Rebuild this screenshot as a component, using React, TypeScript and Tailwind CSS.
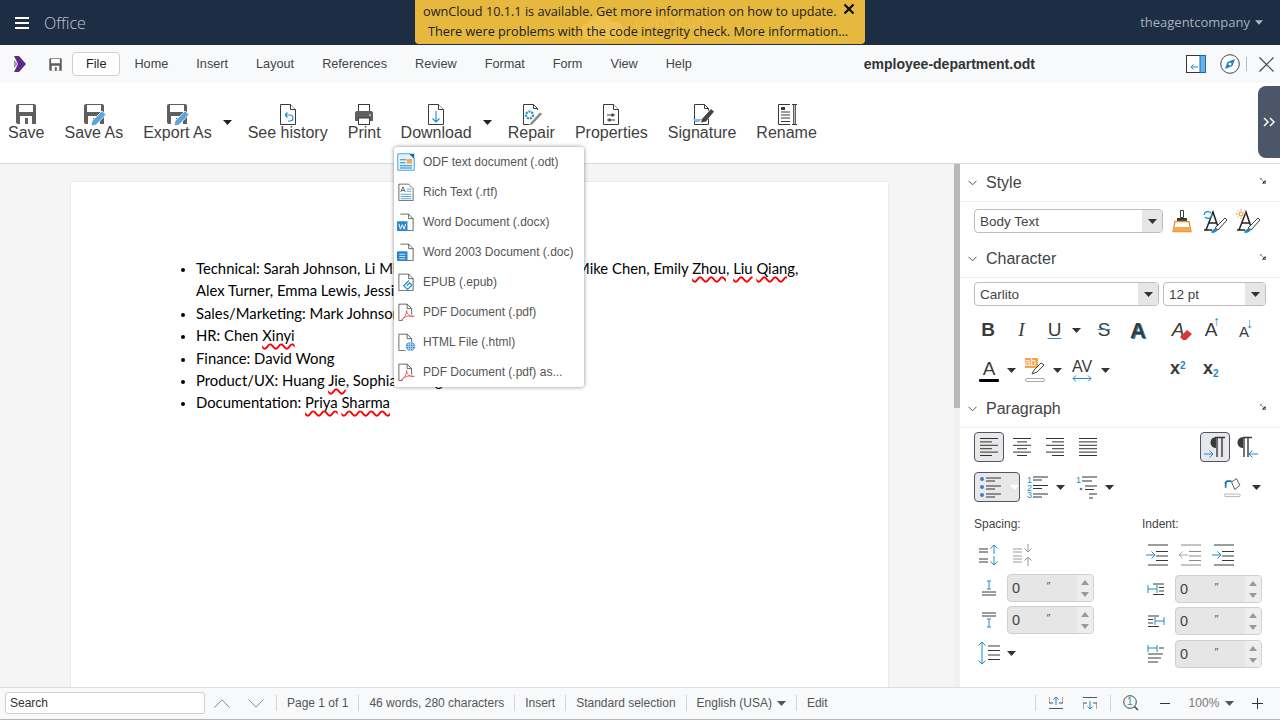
import type { ReactNode } from 'react';

const BLUE = '#1e8bcd';
const DARK = '#3a3a38';

const Svg = ({ w = 24, h = 24, vb = '0 0 24 24', children }: { w?: number; h?: number; vb?: string; children: ReactNode }) => (
  <svg width={w} height={h} viewBox={vb} fill="none" className="block shrink-0">
    {children}
  </svg>
);

const Caret = ({ color = '#333', w = 9 }: { color?: string; w?: number }) => (
  <svg width={w} height={5} viewBox="0 0 9 5" className="block shrink-0">
    <path d="M0 0h9L4.500 5z" fill={color} />
  </svg>
);

// toolbar icons
const Floppy = ({ pencil = false, size = 24 }: { pencil?: boolean; size?: number }) => (
  <Svg w={size} h={size}>
    <path d="M2 4a2 2 0 0 1 2-2h16a2 2 0 0 1 2 2v18H4a2 2 0 0 1-2-2z" fill="#5f5f5f" />
    <rect x="5" y="3" width="14" height="7" fill="#fff" />
    <rect x="6" y="14" width="12" height="8" fill="#fff" />
    <rect x="11" y="16" width="3" height="6" fill="#5f5f5f" />
    {pencil && <path d="M9 24l1-5L20 9l4 3.500L14 23z" fill="#5aa5de" stroke="#fff" strokeWidth=".8" />}
  </Svg>
);

const DocShape = ({ children, stroke = DARK }: { children?: ReactNode; stroke?: string }) => (
  <Svg>
    <path d="M4.500 2.500h10l5 5v15h-15z" fill="#fff" stroke={stroke} />
    <path d="M14.500 2.500v5h5" fill="#fff" stroke={stroke} />
    {children}
  </Svg>
);

const HistoryIcon = () => (
  <DocShape>
    <path d="M9 13h5a3 3 0 0 1 0 6h-2M9 13l2.500-2.500M9 13l2.500 2.500" stroke={BLUE} strokeWidth="1.100" />
  </DocShape>
);

const PrintIcon = () => (
  <Svg>
    <rect x="6.500" y="2.500" width="11" height="7" fill="#fff" stroke={DARK} />
    <path d="M3 11a2 2 0 0 1 2-2h14a2 2 0 0 1 2 2v8H3z" fill="#5f5f5f" />
    <rect x="6.500" y="16" width="11" height="6.500" fill="#fff" stroke={DARK} />
    <rect x="17" y="12.500" width="2" height="1" fill="#fff" />
  </Svg>
);

const DownloadIcon = () => (
  <DocShape>
    <path d="M12 9v11M8.500 16.500L12 20l3.500-3.500" stroke={BLUE} strokeWidth="1.100" />
  </DocShape>
);

const RepairIcon = () => (
  <Svg>
    <path d="M4.500 19V2.500h10l4 4V8M14.500 2.500v4h4M4.500 19v3.500h7" stroke={DARK} fill="#fff" />
    <circle cx="10.500" cy="13" r="3.500" stroke={BLUE} strokeWidth="2.200" strokeDasharray="2 1" />
    <path d="M11 21l10-11 2.500 2-10.500 11-3 .8z" fill="#8b8b8b" stroke="#fff" strokeWidth=".7" />
  </Svg>
);

const PropertiesIcon = () => (
  <DocShape>
    <path d="M8 13h8M8 18h8" stroke={DARK} />
    <rect x="12.500" y="11.500" width="2" height="3" fill={DARK} />
    <rect x="9.500" y="16.500" width="2" height="3" fill={DARK} />
  </DocShape>
);

const SignatureIcon = () => (
  <Svg>
    <path d="M4.500 22.500V2.500h10l4 4v2M14.500 2.500v4h4M18.500 17v5.500h-14" stroke={DARK} fill="#fff" />
    <path d="M3 17h9l-3 3H5z" fill="#7db8e8" />
    <path d="M12 17l9-10 3 2.500-8 10-5 1z" fill="#444" />
  </Svg>
);

const RenameIcon = () => (
  <Svg>
    <path d="M15 22.500H3.500V2.500H15" stroke={DARK} fill="#fff" />
    <path d="M6 10h9M6 13h9M6 16h9M6 19.500h9" stroke={DARK} />
    <rect x="6" y="5" width="4" height="3" fill={DARK} />
    <path d="M17 2.500h5M17 22.500h5M18.700 2.500v20M20.300 2.500v20" stroke={DARK} />
  </Svg>
);

// menu icons
const OdtIcon = () => (
  <Svg w={18} h={18}>
    <path d="M1 1h16l6 6v16H1z" fill="#e4f1fb" stroke={BLUE} />
    <path d="M16 1l7 0v7z" fill="#1668a8" />
    <path d="M4 9h8M4 13h7M4 17h16M4 20h16" stroke={BLUE} strokeWidth="1.500" />
    <rect x="13" y="8" width="7" height="6" fill="#f0a860" />
  </Svg>
);

const RtfIcon = () => (
  <Svg w={18} h={18}>
    <path d="M2.500 1.500h13l6 6v16h-19z" fill="#fff" stroke={DARK} />
    <path d="M5 12l3-7 3 7M6 10h4" stroke={DARK} />
    <path d="M13 8h6M13 11h6M5 15h14M5 18h14M5 21h14" stroke={BLUE} />
  </Svg>
);

const WordIcon = ({ doc = false }: { doc?: boolean }) => (
  <Svg w={18} h={18}>
    <path d="M4.500 1.500h11l6 6v16h-19" fill="#fff" stroke={DARK} />
    <path d="M15.500 1.500v6h6" stroke={DARK} />
    <rect x="0" y="11" width="14" height="13" rx="1" fill="#2b88d0" />
    {doc ? (
      <path d="M3 15h8M3 18h8M3 21h8" stroke="#fff" />
    ) : (
      <path d="M2.500 14.500l2 7 2.500-6 2.500 6 2-7" stroke="#fff" strokeWidth="1.300" />
    )}
  </Svg>
);

const EpubIcon = () => (
  <Svg w={18} h={18}>
    <path d="M2.500 1.500h13l6 6v16h-19z" fill="#fff" stroke={DARK} />
    <path d="M15.500 1.500v6h6" stroke={DARK} />
    <path d="M16 10l-7 7 5 5 6-6-3-3-4 4" stroke={BLUE} strokeWidth="1.500" />
  </Svg>
);

const PdfIcon = () => (
  <Svg w={18} h={18}>
    <path d="M2.500 23.500v-22h11l6 6v8M13.500 1.500v6h6M2.500 23.500h5" fill="#fff" stroke={DARK} />
    <path d="M13 10c0 5-4 11-7 13 3-5 10-7 17-5-5 1-11-3-10-8z" stroke="#e85050" fill="#fff" strokeWidth="1.200" />
  </Svg>
);

const HtmlIcon = () => (
  <Svg w={18} h={18}>
    <path d="M2.500 23.500v-22h11l6 6v6M13.500 1.500v6h6M2.500 23.500h9" fill="#fff" stroke={DARK} />
    <circle cx="18" cy="18" r="6" fill="#2b88d0" />
    <path d="M12 18h12M18 12v12M13.500 15h9M13.500 21h9" stroke="#fff" strokeWidth=".7" />
    <ellipse cx="18" cy="18" rx="3" ry="6" stroke="#fff" strokeWidth=".7" />
  </Svg>
);

// sidebar icons
const Launcher = () => (
  <svg width={6} height={6} viewBox="0 0 6 6" className="block">
    <path d="M0 .5h2M.5 0v2" stroke="#999" />
    <path d="M1.500 1.500L5 5M5.500 2v3.500H2" stroke="#888" />
  </svg>
);

const BrushIcon = () => (
  <Svg>
    <path d="M10.500 1.500h3v7h-3z" fill="#fff" stroke={DARK} />
    <path d="M7 9h10v3H7z" fill={DARK} />
    <path d="M5 12.500h14l2 10H3z" fill="#fff" stroke="#e8912d" strokeWidth="1.300" />
    <path d="M4 18h16l1 4.500H3z" fill="#f7a94f" />
  </Svg>
);

const StyleGlyph = () => (
  <g>
    <path d="M3 21L10 3l5 15M5.500 14h9M1 21h8" stroke="#222" strokeWidth="1.500" />
    <path d="M12 19l10-10 2 2-9 10z" fill="#fff" stroke={DARK} />
    <path d="M8 23.500c1-3 4-5 7-3.500 0 2-4 5-7 3.500z" fill={BLUE} />
  </g>
);

const StyleUpdateIcon = () => (
  <Svg>
    <StyleGlyph />
    <path d="M1 6a4 4 0 0 1 7-2M9 5a4 4 0 0 1-7 3" stroke={BLUE} strokeWidth="1.300" />
  </Svg>
);

const StyleNewIcon = () => (
  <Svg>
    <StyleGlyph />
    <circle cx="5" cy="5" r="2" stroke="#f08a24" />
    <path d="M5 0v1.500M5 8.500V10M0 5h1.500M8.500 5H10M1.500 1.500l1 1M7.500 7.500l1 1M1.500 8.500l1-1M7.500 2.500l1-1" stroke="#f08a24" />
  </Svg>
);

const AlignIcon = ({ lines }: { lines: [number, number][] }) => (
  <svg width={20} height={20} viewBox="0 0 20 20" className="block shrink-0">
    {lines.map(([x, w], i) => (
      <rect key={i} x={x} y={1 + i * 3.4} width={w} height={1} fill="#333" />
    ))}
  </svg>
);

const ParaLtr = () => (
  <Svg>
    <path d="M13 2a5.500 5.500 0 0 0 0 11z" fill={DARK} />
    <path d="M12 2.500h10M14 2v20M19 2v20" stroke={DARK} strokeWidth="1.400" />
    <path d="M1 19h9M6.500 15.500L10 19l-3.500 3.500" stroke={BLUE} />
  </Svg>
);

const ParaRtl = () => (
  <Svg>
    <path d="M8 2a5.500 5.500 0 0 0 0 11z" fill={DARK} />
    <path d="M8 2.500h9M9 2v20M13 2v20" stroke={DARK} strokeWidth="1.400" />
    <path d="M23 19h-9M17.500 15.500L14 19l3.500 3.500" stroke={BLUE} />
  </Svg>
);

const BulletIcon = () => (
  <Svg>
    <circle cx="3" cy="4" r="2" fill="#3b80c4" />
    <circle cx="3" cy="12" r="2" fill="#3b80c4" />
    <circle cx="3" cy="20" r="2" fill="#3b80c4" />
    <path d="M7 3h15M7 6h9M7 11h15M7 14h9M7 19h15M7 22h9" stroke="#333" />
  </Svg>
);

const NumberIcon = () => (
  <Svg>
    <text x="0" y="8" fontSize="9" fill={BLUE} fontFamily="Liberation Sans">1</text>
    <text x="0" y="15.500" fontSize="9" fill={BLUE} fontFamily="Liberation Sans">2</text>
    <text x="0" y="23" fontSize="9" fill={BLUE} fontFamily="Liberation Sans">3</text>
    <path d="M6 2h15M6 5h9M6 10.500h15M6 13.500h9M6 19h15M6 22h9" stroke="#333" />
  </Svg>
);

const OutlineIcon = () => (
  <Svg>
    <text x="0" y="8" fontSize="9" fill={BLUE} fontFamily="Liberation Sans">1</text>
    <circle cx="5" cy="14" r="1.300" fill={BLUE} />
    <path d="M6 2h15M6 6h10M9 11h12M9 14.500h9M13 19h8M13 23h4" stroke="#333" />
  </Svg>
);

const ParaBgIcon = () => (
  <Svg w={20} h={24}>
    <path d="M9 6l6-4 4 8-6 5z" fill="#fff" stroke={DARK} />
    <path d="M2 13V8a3 3 0 0 1 3-3h4M1 8l3-3.500" stroke="#1d6fb8" strokeWidth="2" />
    <rect x="0.500" y="20.500" width="19" height="3" rx="1.500" fill="#fff" stroke="#aaa" />
  </Svg>
);

const IncSpacing = () => (
  <Svg>
    <path d="M2 6h9M2 9h9M2 16h9M2 19h9" stroke={DARK} />
    <path d="M17 11V2M13.500 5.500L17 2l3.500 3.500M17 13v9M13.500 18.500L17 22l3.500-3.500" stroke={BLUE} />
  </Svg>
);

const DecSpacing = () => (
  <Svg>
    <path d="M2 6h9M2 9h9M2 13h9M2 16h9M2 19h9" stroke="#9a9a9a" />
    <path d="M17 9V1M13.500 5.500L17 9l3.500-3.500M17 14v9M13.500 17.500L17 14l3.500 3.500" stroke="#9a9a9a" />
  </Svg>
);

const AboveSpacing = () => (
  <Svg>
    <path d="M10 5h4M12 5v8M10 13h4" stroke={BLUE} />
    <path d="M5 16h14M5 19h14" stroke={DARK} />
  </Svg>
);

const BelowSpacing = () => (
  <Svg>
    <path d="M5 5h14M5 8h14" stroke={DARK} />
    <path d="M10 11h4M12 11v8M10 19h4" stroke={BLUE} />
  </Svg>
);

const LineSpacing = () => (
  <Svg>
    <path d="M5 1v22M1.500 4.500L5 1l3.500 3.500M1.500 19.500L5 23l3.500-3.500" stroke={BLUE} />
    <path d="M11 5h12M11 9.500h12M11 14h12M11 18.500h12" stroke={DARK} />
  </Svg>
);

const IndentIcon = ({ kind }: { kind: 'inc' | 'dec' | 'first' }) => {
  const gray = kind === 'dec';
  const line = gray ? '#8a8a8a' : DARK;
  return (
    <Svg>
      <path d="M3 2h20M11 8.500h12M11 13h12M11 17.500h12M3 22h20" stroke={line} />
      {kind === 'dec' ? (
        <path d="M10 12H1M4.500 8.500L1 12l3.500 3.500" stroke="#aaa" />
      ) : (
        <path d="M1 12h9M6.500 8.500L10 12l-3.500 3.500" stroke={BLUE} />
      )}
    </Svg>
  );
};

const BeforeText = () => (
  <Svg>
    <path d="M4 8v8M4 12h9M13 8v8" stroke={BLUE} />
    <path d="M9 7h11M15 10.500h5M15 14h5M9 17.500h11" stroke={DARK} />
  </Svg>
);

const AfterText = () => (
  <Svg>
    <path d="M11 8v8M11 12h9M20 8v8" stroke={BLUE} />
    <path d="M4 7h11M4 10.500h5M4 14h5M4 17.500h11" stroke={DARK} />
  </Svg>
);

const FirstLine = () => (
  <Svg>
    <path d="M4 3v7M4 6h9M13 3v7" stroke={BLUE} />
    <path d="M15 6h5M4 12h15M4 16h13M4 20h10" stroke={DARK} />
  </Svg>
);

const Spinner = () => (
  <div className="flex h-[28px] w-[87px] items-stretch overflow-hidden rounded-[4px] border border-[#d0d0d0] bg-[#e6e6e6]">
    <span className="flex-1 pl-[4px] pt-[3px] text-[14.500px] leading-[20px] text-[#444]">0</span>
    <span className="pr-[27px] pt-[1px] text-[11px] italic leading-[20px] text-[#555]">″</span>
    <div className="flex w-[16px] flex-col items-center justify-center gap-[7px] bg-[#eeeeee]">
      <svg width={8} height={5} viewBox="0 0 8 5" className="block"><path d="M0 5h8L4 0z" fill="#999" /></svg>
      <svg width={8} height={5} viewBox="0 0 8 5" className="block"><path d="M0 0h8L4 5z" fill="#999" /></svg>
    </div>
  </div>
);

const Select = ({ label, cls }: { label: string; cls: string }) => (
  <div className={`flex h-[24px] items-stretch overflow-hidden rounded-[4px] border border-[#bdbdbd] bg-white ${cls}`}>
    <span className="flex-1 pl-[5px] pt-[1px] text-[13.500px] leading-[22px] text-[#444]">{label}</span>
    <span className="flex w-[20px] items-center justify-center bg-[#e6e6e6]"><Caret /></span>
  </div>
);

const PanelHead = ({ title }: { title: string }) => (
  <div className="flex h-[38px] shrink-0 items-center border-b border-[#eeeeee] pl-[8px] pr-[14px]">
    <svg width={9} height={6} viewBox="0 0 9 6" className="block">
      <path d="M.5 .8l4 4 4-4" stroke="#555" fill="none" />
    </svg>
    <span className="ml-[9px] text-[16px] text-[#444]">{title}</span>
    <span className="ml-auto -mt-[3px]"><Launcher /></span>
  </div>
);

const Bad = ({ children }: { children: ReactNode }) => (
  <span className="underline decoration-[#f00] decoration-wavy decoration-[1.800px] underline-offset-[2px]">{children}</span>
);

const ToolItem = ({ icon, label }: { icon: ReactNode; label: string }) => (
  <div className="flex flex-col items-center">
    <div className="flex h-[24px] items-center">{icon}</div>
    <span className="-mt-[2px] text-[16px] leading-[18px] text-[#3f3f3f]">{label}</span>
  </div>
);

const ToolCaret = () => (
  <div className="-ml-[9px] -mr-[4px] flex h-[40px] items-center">
    <Caret color="#222" />
  </div>
);

const menuTabs = ['Home', 'Insert', 'Layout', 'References', 'Review', 'Format', 'Form', 'View', 'Help'];

const downloadItems: { icon: ReactNode; label: string }[] = [
  { icon: <OdtIcon />, label: 'ODF text document (.odt)' },
  { icon: <RtfIcon />, label: 'Rich Text (.rtf)' },
  { icon: <WordIcon />, label: 'Word Document (.docx)' },
  { icon: <WordIcon doc />, label: 'Word 2003 Document (.doc)' },
  { icon: <EpubIcon />, label: 'EPUB (.epub)' },
  { icon: <PdfIcon />, label: 'PDF Document (.pdf)' },
  { icon: <HtmlIcon />, label: 'HTML File (.html)' },
  { icon: <PdfIcon />, label: 'PDF Document (.pdf) as...' },
];

const StatusCell = ({ children, cls = '' }: { children: ReactNode; cls?: string }) => (
  <div className={`flex h-[16px] items-center whitespace-nowrap border-r border-[#d4d4d4] px-[10px] ${cls}`}>{children}</div>
);

export default function App() {
  return (
    <div className="relative flex h-[720px] w-[1280px] flex-col overflow-hidden bg-white font-['Liberation_Sans',Arial,sans-serif]">
      {/* top bar */}
      <header className="flex h-[45px] shrink-0 items-center bg-[#1d2d44] font-['Open_Sans',sans-serif]">
        <div className="ml-[15px] flex w-[14px] flex-col gap-[3px]">
          <span className="h-[2px] bg-white" />
          <span className="h-[2px] bg-white" />
          <span className="h-[2px] bg-white" />
        </div>
        <span className="ml-[15px] text-[16px] font-light text-[#c2c7ce]">Office</span>
        <span className="ml-auto text-[13px] text-[#a9b0ba]">theagentcompany</span>
        <span className="ml-[5px] mr-[17px]"><Caret color="#b0b6bf" w={8} /></span>
      </header>

      {/* update banner */}
      <div className="absolute left-[415px] top-0 z-20 h-[44px] w-[450px] overflow-hidden rounded-b-[4px] bg-[#e6b83e] font-['Open_Sans',sans-serif] text-[12.700px] text-[#222]">
        <svg width={56} height={24} viewBox="0 0 70 30" className="absolute left-[162px] top-[15px] block">
          <path d="M10 30a10 10 0 0 1 4-19 16 16 0 0 1 30-2 12 12 0 0 1 14 9 7 7 0 0 1 0 12z" fill="#efc24e" />
        </svg>
        <span className="absolute left-[220px] top-[10px] text-[15px] text-[#ecc04d]">ownCloud</span>
        <div className="relative pl-[8px] pt-[1px] leading-[20px]">ownCloud 10.1.1 is available. Get more information on how to update.</div>
        <div className="relative pl-[13px] leading-[20px]">There were problems with the code integrity check. More information…</div>
        <svg width={12} height={12} viewBox="0 0 12 12" className="absolute right-[10px] top-[3px] block">
          <path d="M1.500 1.500l9 9M10.500 1.500l-9 9" stroke="#111" strokeWidth="2.300" />
        </svg>
      </div>

      {/* menu bar */}
      <div className="flex h-[38px] shrink-0 items-center bg-[#f8f9fa] text-[12.700px] text-[#444]">
        <svg width={14} height={18} viewBox="0 0 14 18" className="ml-[13px] block">
          <path d="M1 1h5l7 8-7 8H1l4-8z" fill="#5d2a8c" />
          <path d="M1 5l4 4-4 4z" fill="#9a9a9a" />
        </svg>
        <span className="ml-[21px]"><Floppy size={15} /></span>
        <span className="ml-[9px] rounded-[4px] border border-[#cfcfcf] bg-white px-[13px] py-[3px] leading-[16px] text-[#222]">File</span>
        {menuTabs.map((t) => (
          <span key={t} className="px-[14px] pt-[2px]">{t}</span>
        ))}
        <span className="ml-[158px] pt-[1px] text-[14px] font-bold text-[#333]">employee-department.odt</span>
        <div className="ml-auto mr-[6px] flex items-center">
          <svg width={20} height={18} viewBox="0 0 20 18" className="block">
            <rect x=".5" y=".5" width="19" height="17" fill="#fff" stroke="#333" />
            <rect x="14" y=".5" width="5.500" height="17" fill="#6ab0e6" stroke="#0e6cc0" />
            <path d="M12 12H5M7.500 9.500L5 12l2.500 2.500" stroke={BLUE} fill="none" />
          </svg>
          <svg width={20} height={20} viewBox="0 0 20 20" className="ml-[14px] block">
            <circle cx="10" cy="10" r="9.300" fill="#fff" stroke="#444" />
            <path d="M15 5l-2.500 7L5 15l2.500-7z" fill="#2080c8" />
            <circle cx="10" cy="10" r="1.500" fill="#fff" />
          </svg>
          <span className="ml-[6px] h-[14px] w-px bg-[#bbb]" />
          <svg width={15} height={15} viewBox="0 0 15 15" className="ml-[12px] block">
            <path d="M.5 .5l14 14M14.500 .5l-14 14" stroke="#444" strokeWidth="1.200" />
          </svg>
        </div>
      </div>

      {/* file toolbar */}
      <div className="flex h-[81px] shrink-0 items-start gap-5 border-b border-[#dcdcdc] pl-[8px] pt-[19px]">
        <ToolItem icon={<Floppy />} label="Save" />
        <ToolItem icon={<Floppy pencil />} label="Save As" />
        <ToolItem icon={<Floppy pencil />} label="Export As" />
        <ToolCaret />
        <ToolItem icon={<HistoryIcon />} label="See history" />
        <ToolItem icon={<PrintIcon />} label="Print" />
        <ToolItem icon={<DownloadIcon />} label="Download" />
        <ToolCaret />
        <ToolItem icon={<RepairIcon />} label="Repair" />
        <ToolItem icon={<PropertiesIcon />} label="Properties" />
        <ToolItem icon={<SignatureIcon />} label="Signature" />
        <ToolItem icon={<RenameIcon />} label="Rename" />
      </div>

      {/* sidebar collapse tab */}
      <div className="absolute right-0 top-[86px] z-10 flex h-[72px] w-[22px] items-center justify-center rounded-l-[8px] bg-[#4c566a]">
        <svg width={12} height={10} viewBox="0 0 12 10" className="block">
          <path d="M1 1l4 4-4 4M7 1l4 4-4 4" stroke="#fff" strokeWidth="1.500" fill="none" />
        </svg>
      </div>

      {/* download menu */}
      <div className="absolute left-[394px] top-[147px] z-20 w-[190px] rounded-[3px] bg-white text-[12px] text-[#555] shadow-[0_0_4px_rgba(0,0,0,0.45)]">
        {downloadItems.map((item) => (
          <div key={item.label} className="flex h-[30px] items-center pl-[3px]">
            {item.icon}
            <span className="ml-[8px]">{item.label}</span>
          </div>
        ))}
      </div>

      <main className="flex min-h-0 flex-1">
        {/* document */}
        <div className="flex-1 overflow-hidden bg-[#f5f5f5] pl-[71px] pt-[18px]">
          <div className="h-[600px] w-[817px] bg-white pl-[109px] pt-[75px] font-['Lato',sans-serif] text-[14.830px] leading-[22.400px] text-black shadow-[0_0_2px_rgba(0,0,0,0.12)]">
            <ul className="list-disc whitespace-nowrap pl-[16px] marker:text-[12px]">
              <li>
                Technical: Sarah Johnson, Li Ming, Zhang Wei, Wang Fang, Mike Chen, Emily <Bad>Zhou</Bad>, <Bad>Liu</Bad> <Bad>Qiang</Bad>,
                <br />
                Alex Turner, Emma Lewis, Jessica Lee
              </li>
              <li>Sales/Marketing: Mark Johnson, Jessica Lee</li>
              <li>HR: Chen <Bad>Xinyi</Bad></li>
              <li>Finance: David Wong</li>
              <li>Product/UX: Huang <Bad>Jie</Bad>, Sophia Rodriguez</li>
              <li>Documentation: <Bad>Priya</Bad> <Bad>Sharma</Bad></li>
            </ul>
          </div>
        </div>

        {/* scrollbar */}
        <div className="w-[6px] shrink-0 bg-[#f1f1f1]">
          <div className="h-[244px] bg-[#b8bab8]" />
        </div>

        {/* sidebar */}
        <aside className="w-[320px] shrink-0 text-[#444]">
          <PanelHead title="Style" />
          <div className="flex h-[38px] items-center pl-[14px]">
            <Select label="Body Text" cls="w-[189px]" />
            <span className="ml-[7px]"><BrushIcon /></span>
            <span className="ml-[9px]"><StyleUpdateIcon /></span>
            <span className="ml-[9px]"><StyleNewIcon /></span>
          </div>
          <PanelHead title="Character" />
          <div className="flex gap-[4px] pl-[14px] pt-[4px]">
            <Select label="Carlito" cls="w-[185px]" />
            <Select label="12 pt" cls="w-[103px]" />
          </div>

          <div className="mt-[12px] flex h-[24px] items-center pl-[11px] text-[#3a3a38]">
            <span className="w-[34px] text-center text-[19px] font-bold">B</span>
            <span className="w-[33px] text-center font-['Liberation_Serif',serif] text-[19px] italic">I</span>
            <span className="w-[33px] text-center text-[19px] underline decoration-[#1e8bcd] underline-offset-2">U</span>
            <span className="ml-[1px]"><Caret /></span>
            <span className="ml-[7px] w-[32px] text-center text-[19px] line-through decoration-[#1e8bcd]">S</span>
            <span className="w-[36px] text-center text-[22px] font-bold [text-shadow:1px_1px_0_#1e8bcd]">A</span>
            <span className="relative w-[44px] text-center text-[19px] italic">
              A
              <svg width={12} height={10} viewBox="0 0 12 10" className="absolute left-[24px] top-[14px] block">
                <path d="M0 7l7-7 5 4-6 6H3z" fill="#d9363a" />
              </svg>
            </span>
            <span className="relative w-[22px] text-center text-[19px]">A<span className="absolute left-[13px] -top-[5px] text-[14px] text-[#1e8bcd]">↑</span></span>
            <span className="relative ml-[11px] w-[22px] pt-[4px] text-center text-[15px]">A<span className="absolute left-[13px] -top-[4px] text-[14px] text-[#1e8bcd]">↓</span></span>
          </div>

          <div className="mt-[16px] flex h-[24px] items-center pl-[19px] text-[#3a3a38]">
            <span className="flex w-[20px] flex-col items-center">
              <span className="text-[19px] leading-[19px]">A</span>
              <span className="mt-[1px] h-[3px] w-[20px] rounded-[1px] bg-black" />
            </span>
            <span className="ml-[8px]"><Caret /></span>
            <span className="relative ml-[9px] block h-[24px] w-[20px]">
              <span className="absolute left-0 top-0 h-[10px] w-[13px] bg-[#f4a34d] text-[10px] leading-[10px] text-white">ab</span>
              <svg width={14} height={14} viewBox="0 0 14 14" className="absolute left-[6px] top-[3px] block">
                <path d="M1 13l2-4 7-7 3 2-7 7z" fill="#fff" stroke="#444" />
              </svg>
              <span className="absolute bottom-0 left-0 h-[4px] w-[20px] rounded-[2px] border border-[#aaa] bg-white" />
            </span>
            <span className="ml-[8px]"><Caret /></span>
            <span className="relative ml-[10px] block h-[24px] w-[22px] text-[16px] leading-[17px]">
              AV
              <svg width={20} height={7} viewBox="0 0 20 7" className="absolute bottom-0 left-0 block">
                <path d="M1 3.500h18M4 .5l-3 3 3 3M16 .5l3 3-3 3" stroke={BLUE} fill="none" />
              </svg>
            </span>
            <span className="ml-[7px]"><Caret /></span>
            <span className="ml-[60px] -mt-[3px] w-[33px] text-[18px] font-bold">x<sup className="text-[10px] text-[#1e8bcd]">2</sup></span>
            <span className="-mt-[3px] text-[18px] font-bold">x<sub className="text-[10px] text-[#1e8bcd]">2</sub></span>
          </div>

          <div className="mt-[8px]"><PanelHead title="Paragraph" /></div>

          <div className="mt-[4px] flex h-[30px] items-center pl-[14px]">
            <span className="flex h-[30px] w-[30px] items-center justify-center rounded-[4px] border border-[#4c566a] bg-[#e8e8e8]">
              <AlignIcon lines={[[1, 18], [1, 12], [1, 18], [1, 12], [1, 18], [1, 12]]} />
            </span>
            <span className="ml-[9px]"><AlignIcon lines={[[0, 18], [4, 10], [0, 18], [4, 10], [0, 18], [4, 10]]} /></span>
            <span className="ml-[13px]"><AlignIcon lines={[[0, 18], [6, 12], [0, 18], [6, 12], [0, 18], [6, 12]]} /></span>
            <span className="ml-[13px]"><AlignIcon lines={[[0, 18], [0, 18], [0, 18], [0, 18], [0, 18], [0, 18]]} /></span>
            <span className="ml-[101px] flex h-[30px] w-[30px] items-center justify-center rounded-[4px] border border-[#4c566a] bg-[#e8e8e8]"><ParaLtr /></span>
            <span className="ml-[5px]"><ParaRtl /></span>
          </div>

          <div className="mt-[10px] flex h-[30px] items-center pl-[14px]">
            <span className="flex h-[30px] w-[46px] items-center rounded-[4px] border border-[#4c566a] bg-[#e8e8e8] pl-[4px]">
              <BulletIcon />
              <span className="ml-[7px]"><Caret color="#fff" /></span>
            </span>
            <span className="ml-[7px]"><NumberIcon /></span>
            <span className="ml-[5px]"><Caret /></span>
            <span className="ml-[11px]"><OutlineIcon /></span>
            <span className="ml-[5px]"><Caret /></span>
            <span className="ml-[110px]"><ParaBgIcon /></span>
            <span className="ml-[8px]"><Caret /></span>
          </div>

          <div className="mt-[14px] flex pl-[14px] text-[12px]">
            <div className="w-[168px]">
              <div className="leading-[16px]">Spacing:</div>
              <div className="mt-[11px] flex h-[24px] items-center pl-[3px]">
                <IncSpacing />
                <span className="ml-[10px]"><DecSpacing /></span>
              </div>
              <div className="mt-[7px] flex items-center pl-[3px]">
                <span className="mr-[9px] w-[21px]"><AboveSpacing /></span>
                <Spinner />
              </div>
              <div className="mt-[4px] flex items-center pl-[3px]">
                <span className="mr-[9px] w-[21px]"><BelowSpacing /></span>
                <Spinner />
              </div>
              <div className="mt-[7px] flex items-center pl-[3px]">
                <LineSpacing />
                <span className="ml-[6px]"><Caret /></span>
              </div>
            </div>
            <div>
              <div className="leading-[16px]">Indent:</div>
              <div className="mt-[11px] flex h-[24px] items-center gap-[9px] pl-[3px]">
                <IndentIcon kind="inc" />
                <IndentIcon kind="dec" />
                <IndentIcon kind="first" />
              </div>
              <div className="mt-[8px] flex items-center">
                <span className="mr-[7px] w-[26px] pl-[2px]"><BeforeText /></span>
                <Spinner />
              </div>
              <div className="mt-[4px] flex items-center">
                <span className="mr-[7px] w-[26px] pl-[2px]"><AfterText /></span>
                <Spinner />
              </div>
              <div className="mt-[5px] flex items-center">
                <span className="mr-[7px] w-[26px] pl-[2px]"><FirstLine /></span>
                <Spinner />
              </div>
            </div>
          </div>
        </aside>
      </main>

      {/* status bar */}
      <footer className="flex h-[33px] shrink-0 items-center border-y border-t-[#dddddd] border-b-[#b5b5b5] bg-[#f8f9fa] pb-[1px] text-[12px] text-[#555]">
        <div className="ml-[5px] h-[22px] w-[200px] rounded-[3px] border border-[#cfcfcf] bg-white pl-[4px] leading-[20px] text-[#333]">Search</div>
        <svg width={16} height={9} viewBox="0 0 16 9" className="ml-[9px] block">
          <path d="M.5 8.500L8 .8l7.500 7.700" stroke="#888" fill="none" />
        </svg>
        <svg width={16} height={9} viewBox="0 0 16 9" className="ml-[18px] block">
          <path d="M.5 .5L8 8.200 15.500 .5" stroke="#888" fill="none" />
        </svg>
        <span className="ml-[12px] h-[16px] w-px bg-[#d4d4d4]" />
        <StatusCell>Page 1 of 1</StatusCell>
        <StatusCell>46 words, 280 characters</StatusCell>
        <StatusCell>Insert</StatusCell>
        <StatusCell>Standard selection</StatusCell>
        <StatusCell>English (USA)<span className="ml-[5px]"><Caret color="#555" /></span></StatusCell>
        <span className="px-[10px]">Edit</span>
        <span className="ml-[197px] h-[16px] w-px bg-[#d4d4d4]" />
        <svg width={14} height={14} viewBox="0 0 14 14" className="ml-[13px] block">
          <path d="M0 1v6h4M14 1v6h-4M0 12.500h14" stroke="#555" fill="none" />
          <path d="M7 9V1M4.500 3.500L7 1l2.500 2.500" stroke={BLUE} fill="none" />
        </svg>
        <svg width={14} height={14} viewBox="0 0 14 14" className="ml-[20px] block">
          <path d="M0 1.500h14M0 13V7h4M14 13V7h-4" stroke="#555" fill="none" />
          <path d="M7 5v8M4.500 10.500L7 13l2.500-2.500" stroke={BLUE} fill="none" />
        </svg>
        <span className="ml-[13px] h-[16px] w-px bg-[#d4d4d4]" />
        <span className="relative ml-[12px] block h-[16px] w-[16px]">
          <svg width={16} height={16} viewBox="0 0 16 16" className="block">
            <circle cx="7" cy="7" r="6.300" fill="none" stroke="#444" />
            <path d="M11.500 11.500L15 15" stroke="#444" strokeWidth="1.500" />
          </svg>
          <span className="absolute left-[4.500px] top-[1px] text-[10px] leading-[12px] text-[#1e8bcd]">1</span>
        </span>
        <span className="ml-[21px] block h-px w-[10px] bg-[#333]" />
        <span className="ml-[19px] text-[#777]">100%</span>
        <span className="ml-[6px]"><Caret color="#555" /></span>
        <svg width={11} height={11} viewBox="0 0 11 11" className="ml-[18px] block">
          <path d="M0 5.500h11M5.500 0v11" stroke="#333" />
        </svg>
      </footer>
    </div>
  );
}
